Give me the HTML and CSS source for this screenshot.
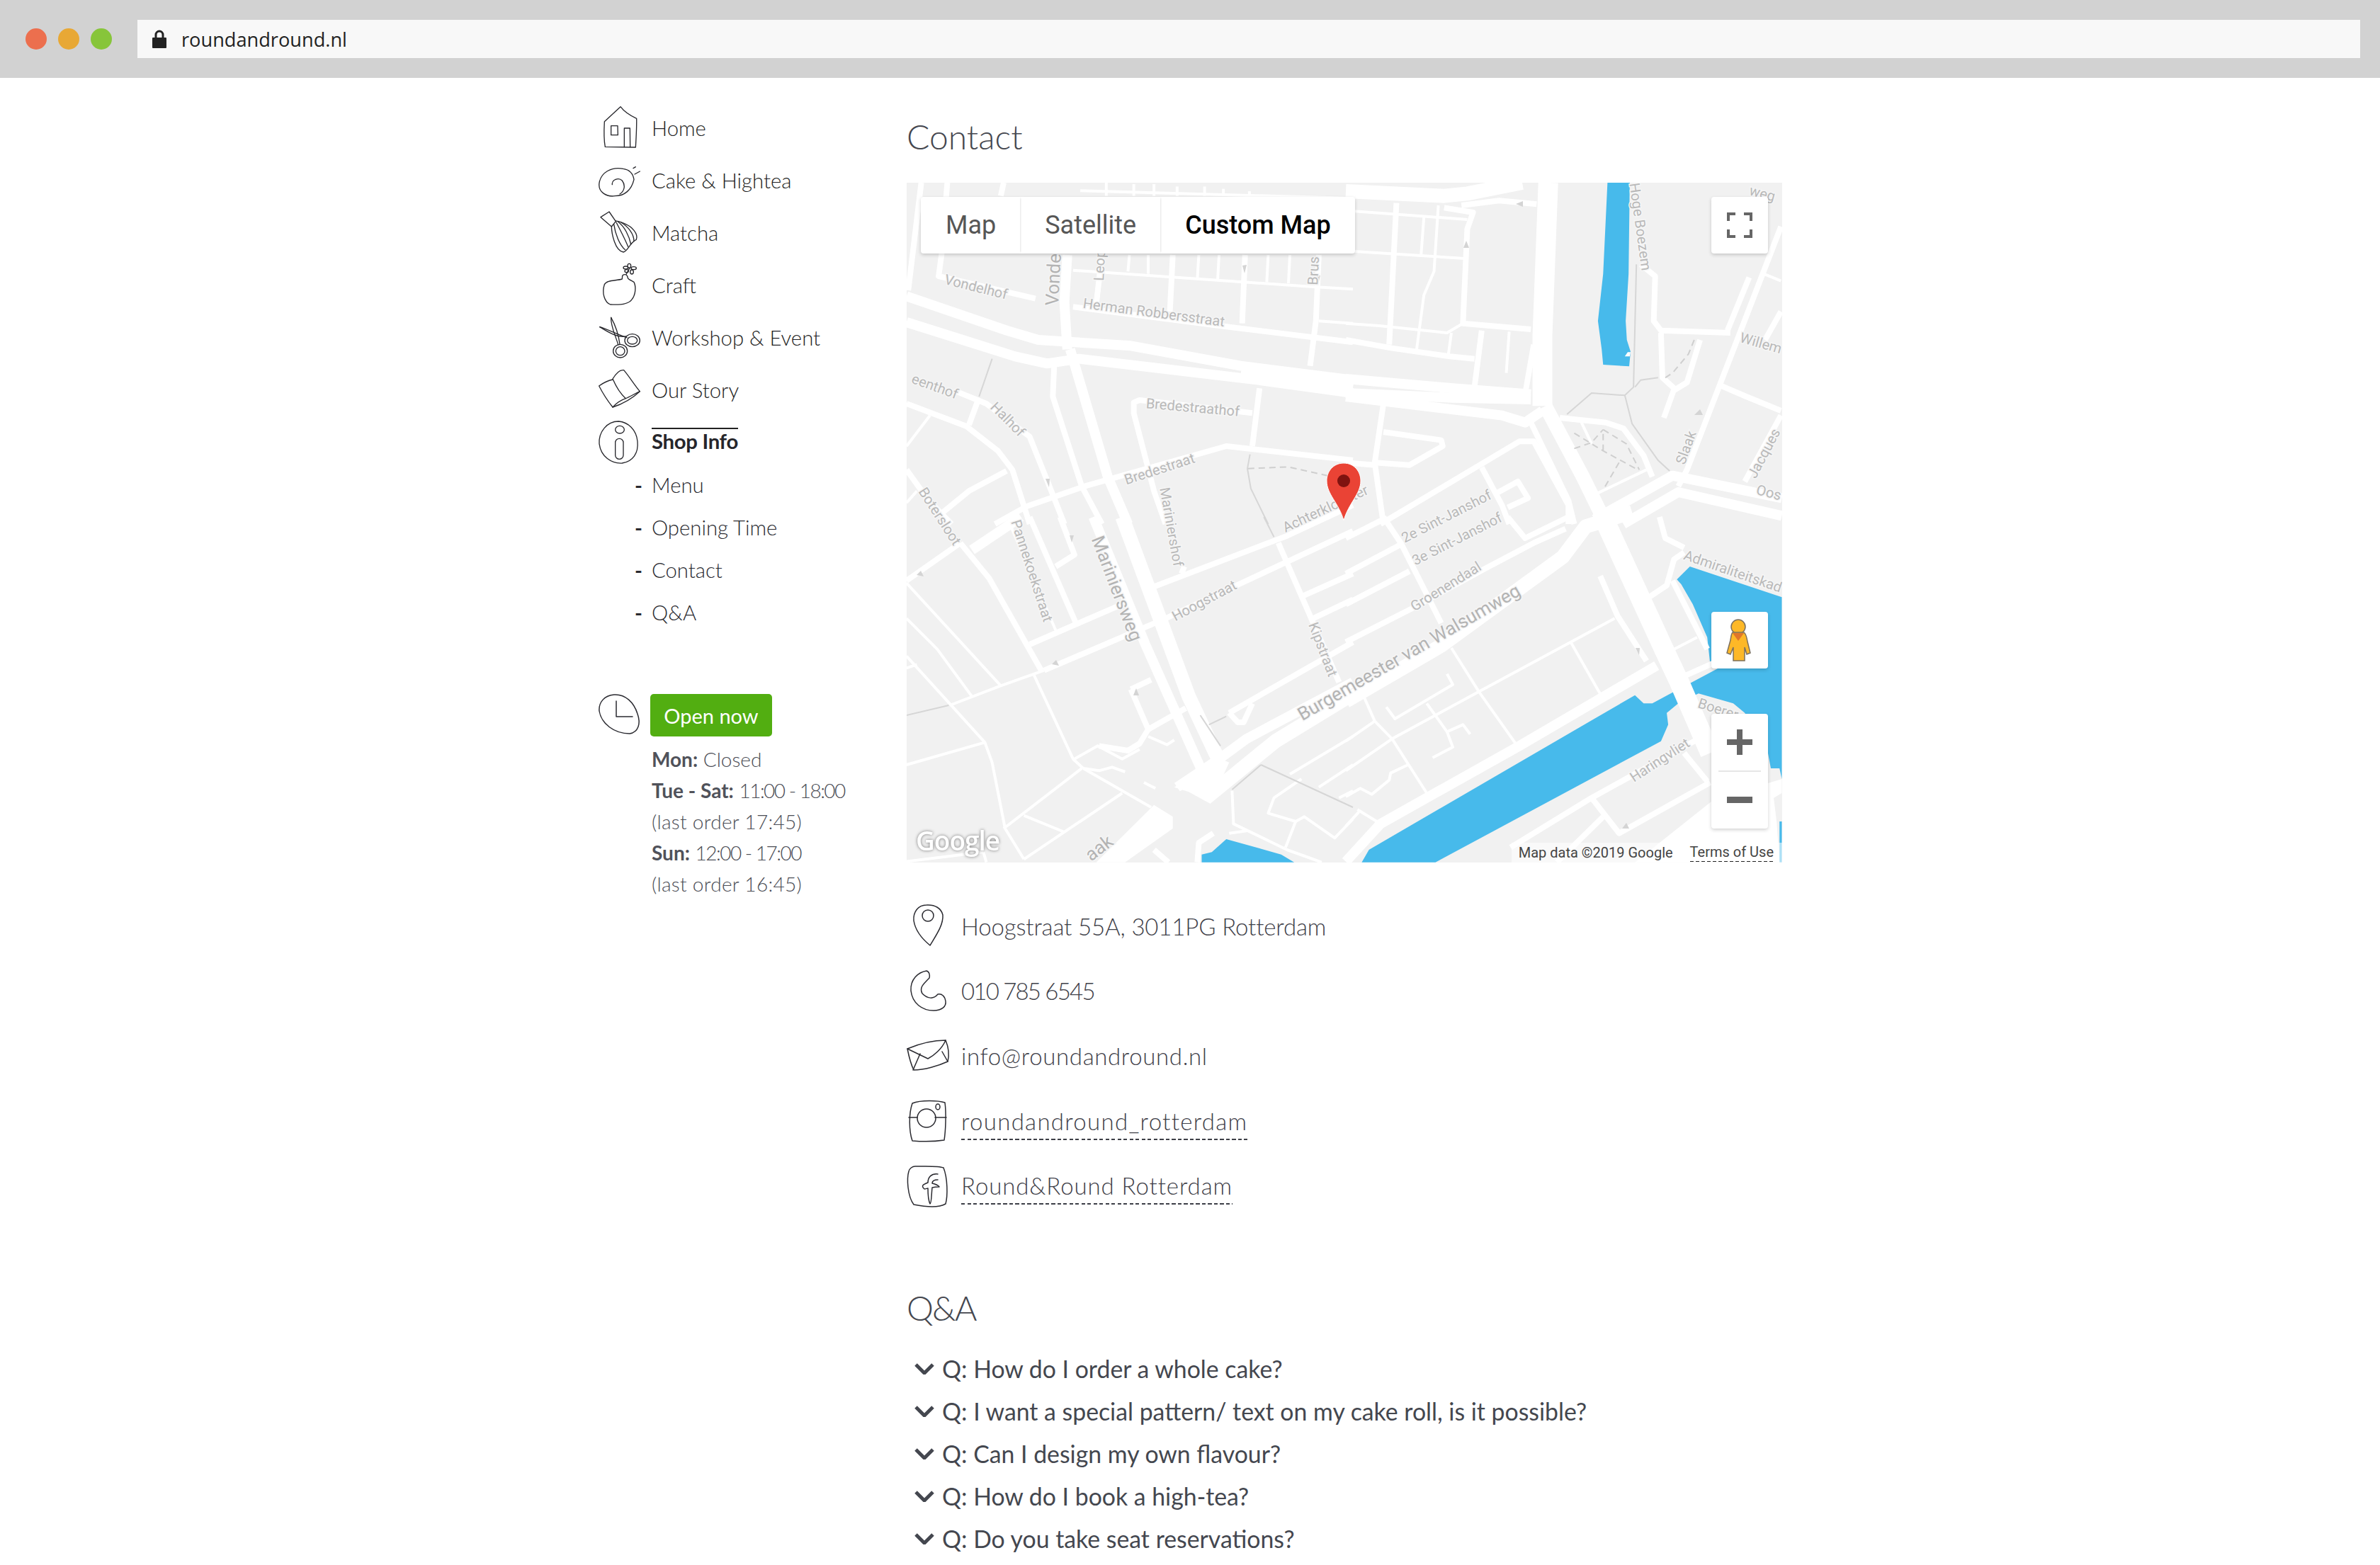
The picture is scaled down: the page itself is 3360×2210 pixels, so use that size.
FILE: index.html
```html
<!DOCTYPE html>
<html lang="en">
<head>
<meta charset="utf-8">
<title>Round&amp;Round - Contact</title>
<link rel="stylesheet" href="styles.css">
</head>
<body>
<header class="browser">
  <div class="dots"><span class="dot red"></span><span class="dot amber"></span><span class="dot green"></span></div>
  <div class="address">
    <svg class="lock" viewBox="0 0 20 26"><path class="lock-body" d="M1 11h18a1 1 0 0 1 1 1v13a1 1 0 0 1-1 1H1a1 1 0 0 1-1-1V12a1 1 0 0 1 1-1z"/><path class="lock-bow" d="M5 12V7a5 5 0 0 1 10 0v5"/></svg>
    <span>roundandround.nl</span>
  </div>
</header>
<div class="page">
  <aside class="sidebar">
    <ul class="nav">
      <li class="nav-item"><svg class="sk nav-icon" viewBox="75 60 180 180"><path d="M168 62 L100 125 C98 160 97 200 103 232 L232 234 C234 200 237 150 236 112 C210 100 185 85 168 62Z"/><path d="M128 143 L156 143 L157 182 L128 182Z"/><path d="M184 233 L184 153 L208 153 L209 233"/></svg><a>Home</a></li>
      <li class="nav-item"><svg class="sk nav-icon" viewBox="75 282 180 180"><path d="M180 325 C130 315 85 340 78 385 C72 425 110 445 145 440 C185 440 215 415 225 370 C220 340 200 328 180 325Z"/><path d="M133 392 C130 372 160 360 175 375 C190 395 185 420 165 432"/><path d="M222 323 L232 317"/><path d="M228 348 L250 336"/></svg><a>Cake &amp; Hightea</a></li>
      <li class="nav-item"><svg class="sk nav-icon" viewBox="75 504 180 180"><path d="M84 530 L120 507 L148 548 L130 570 Z"/><path d="M130 568 C130 600 145 672 180 678 C200 675 205 640 235 625 C245 600 215 570 190 560 C175 550 160 548 148 546"/><path d="M140 560 C145 600 165 650 188 668"/><path d="M150 552 C170 590 190 630 200 655"/><path d="M158 550 C185 570 205 610 212 645"/><path d="M170 552 C200 570 225 600 225 632"/></svg><a>Matcha</a></li>
      <li class="nav-item"><svg class="sk nav-icon" viewBox="75 726 180 180"><path d="M175 792 C150 800 110 795 100 815 C88 850 100 890 125 900 C160 902 200 900 215 880 C232 860 235 825 225 805 C215 800 205 795 200 790 L196 778 C190 770 180 772 176 778Z"/><path d="M192 772 L207 745"/><ellipse cx="205" cy="736" rx="7" ry="9"/><ellipse cx="224" cy="746" rx="11" ry="6"/><ellipse cx="216" cy="762" rx="7" ry="9"/><ellipse cx="190" cy="744" rx="10" ry="6"/><ellipse cx="194" cy="758" rx="8" ry="6"/></svg><a>Craft</a></li>
      <li class="nav-item"><svg class="sk nav-icon" viewBox="75 948 180 180"><path d="M128 955 C125 990 150 1040 158 1070"/><path d="M128 955 C145 985 160 1030 165 1068"/><path d="M80 995 C115 1005 160 1030 195 1040"/><path d="M80 995 C120 1020 155 1040 190 1035"/><ellipse cx="218" cy="1052" rx="32" ry="27"/><ellipse cx="218" cy="1052" rx="21" ry="16"/><ellipse cx="167" cy="1097" rx="30" ry="28"/><ellipse cx="167" cy="1097" rx="19" ry="18"/></svg><a>Workshop &amp; Event</a></li>
      <li class="nav-item"><svg class="sk nav-icon" viewBox="75 1170 180 180"><path d="M135 1215 C150 1190 165 1175 182 1178 C205 1205 230 1245 250 1268 C225 1280 205 1292 190 1298 C170 1280 150 1250 135 1215Z"/><path d="M135 1218 C115 1222 95 1232 77 1245 C95 1280 115 1310 135 1335 C150 1318 170 1305 190 1298"/><path d="M135 1335 C165 1325 205 1310 250 1268"/></svg><a>Our Story</a></li>
      <li class="nav-item active"><svg class="sk nav-icon" viewBox="75 1392 180 180"><path d="M160 1395 C110 1395 75 1440 78 1490 C85 1545 130 1575 175 1572 C220 1565 245 1530 240 1480 C235 1430 200 1398 160 1395Z"/><ellipse cx="165" cy="1430" rx="19" ry="16"/><rect x="146" y="1468" width="34" height="87" rx="17"/></svg><a>Shop Info</a></li>
    </ul>
    <ul class="subnav">
      <li>Menu</li>
      <li>Opening Time</li>
      <li>Contact</li>
      <li>Q&amp;A</li>
    </ul>
    <div class="status">
      <svg class="sk-px clock" viewBox="0 0 60 60"><path d="M22 1 C8 2 0 12 1 24 C4 42 22 56 44 56 C56 54 60 42 55 28 C50 12 38 0 22 1Z"/><path d="M25 10 L25 32 L48 32"/></svg>
      <span class="open-badge">Open now</span>
    </div>
    <div class="hours">
      <p><b>Mon:</b> Closed</p>
      <p><b>Tue - Sat:</b> <span class="time">11:00 - 18:00</span></p>
      <p class="last">(last order 17:45)</p>
      <p><b>Sun:</b> <span class="time">12:00 - 17:00</span></p>
      <p class="last">(last order 16:45)</p>
    </div>
  </aside>
  <main class="content">
    <h1 class="title">Contact</h1>
    <section class="map">
      <svg class="map-canvas" viewBox="0 0 1236 960">
        <!-- top left quadrant -->
        <g transform="translate(-10,-18) scale(.40816,.33333)">
          <g class="rd xl">
            <path d="M1180 865 L1568 925"/>
          </g>
          <g class="rd l">
            <path d="M24 535 L370 680 L480 720 L800 745 L1180 830 L1568 890"/>
            <path d="M24 645 L400 790 L510 820 L620 800 L1240 890 L1568 945"/>
            <path d="M590 760 L720 1300 L790 1500"/>
            <path d="M580 360 L570 560 L580 760"/>
          </g>
          <g class="rd m">
            <path d="M535 820 L530 960 L630 1340 L700 1500"/>
            <path d="M700 360 L680 570"/>
            <path d="M945 360 L935 600"/>
            <path d="M1195 360 L1185 650"/>
            <path d="M1450 360 L1440 640 L1420 830"/>
            <path d="M600 580 L1140 665 L1568 730"/>
            <path d="M165 54 L145 360 L135 450 L470 545"/>
            <path d="M75 54 L30 510"/>
            <path d="M360 54 L350 110"/>
            <path d="M200 940 L300 990 L450 1130 L515 1330 L570 1500"/>
            <path d="M270 980 L240 1080"/>
            <path d="M24 990 L230 1085 L340 1190 L390 1270 L450 1500"/>
            <path d="M150 1450 L240 1360 L370 1275"/>
            <path d="M330 1500 L440 1425 L640 1340 L1130 1170 L1568 1230"/>
            <path d="M1220 1030 L830 975 L810 985 L810 1030 L880 1360 L920 1500"/>
            <path d="M1245 925 L1220 1170"/>
            <path d="M24 1270 L100 1400 L180 1500"/>
          </g>
          <g class="rd s">
            <path d="M600 425 L1430 495 L1568 505"/>
            <path d="M795 360 L790 430"/><path d="M860 360 L860 440"/><path d="M1035 360 L1030 460"/><path d="M1105 360 L1100 470"/><path d="M1275 360 L1270 475"/><path d="M1350 360 L1345 480"/>
            <path d="M1450 640 L1568 650"/>
            <path d="M24 1170 L105 1040"/>
            <path d="M24 1410 L60 1360"/>
            <path d="M625 88 L1568 120"/>
            <path d="M715 54 L715 110"/><path d="M810 60 L810 110"/><path d="M880 60 L880 110"/><path d="M960 70 L960 110"/><path d="M1055 70 L1055 110"/><path d="M1120 80 L1120 110"/><path d="M1210 90 L1210 110"/>
          </g>
          <path class="pth" d="M320 800 L275 960"/>
          <path class="pth" d="M1212 1205 L1203 1265 L1215 1350 L1275 1500"/>
          <path class="pth dash" d="M1205 1265 L1345 1258 L1480 1295"/>
        </g>
        <!-- top right quadrant -->
        <g transform="translate(620,-18) scale(.40816,.33333)">
          <polygon class="water" points="905,54 982,54 978,440 968,640 972,720 985,770 980,832 890,825 885,760 872,640 890,440"/>
          <polygon class="paper" points="965,790 975,772 985,772 982,790"/>
          <g class="rd xxl">
            <path d="M700 54 L680 700 L680 1000"/>
          </g>
          <g class="rd xl">
            <path d="M690 1000 L820 1300 L900 1500"/>
            <path d="M0 90 L340 110 L420 100 L610 54"/>
          </g>
          <g class="rd l">
            <path d="M0 885 L370 925 L640 950"/>
            <path d="M0 945 L370 965 L640 972"/>
            <path d="M0 960 L540 1040 L620 1070 L680 1020"/>
            <path d="M860 1480 L1130 1295 L1508 1390"/>
            <path d="M960 1500 L1150 1365 L1508 1465"/>
          </g>
          <g class="rd m">
            <path d="M400 150 L530 130 L660 145"/>
            <path d="M340 160 L440 180 L420 250 L405 650 L640 675"/>
            <path d="M175 140 L150 740"/>
            <path d="M0 720 L160 755 L360 790 L445 800"/>
            <path d="M470 680 L445 920"/>
            <path d="M650 740 L620 950"/>
            <path d="M640 1070 L770 1400 L790 1500"/>
            <path d="M740 1050 L900 1070 L960 1095 L1030 1210 L1060 1300"/>
            <path d="M130 990 L100 1240 L130 1500"/>
            <path d="M130 1110 L330 1145 L335 1170 L220 1250 L100 1240"/>
            <path d="M0 1240 L100 1250"/>
            <path d="M120 1500 L600 1150 L650 1150 L770 1420 L770 1500"/>
            <path d="M470 1260 L540 1420 L565 1500"/>
            <path d="M520 1370 L595 1320 L630 1390 L560 1430"/>
            <path d="M1020 400 L1070 450 L1065 640 L1090 680 L1330 690"/>
            <path d="M1090 690 L1095 880 L1140 930 L1180 900 L1225 720"/>
            <path d="M1135 930 L1100 1050"/>
            <path d="M1505 240 L1180 1270 L1150 1340"/>
            <path d="M1395 455 L1320 680"/>
            <path d="M1290 910 L1385 960 L1505 1020"/>
            <path d="M1505 600 L1450 720"/>
            <path d="M1505 1040 L1380 1320"/>
          </g>
          <g class="rd s">
            <path d="M30 175 L420 210"/>
            <path d="M30 345 L410 375"/>
            <path d="M270 200 L260 365"/>
            <path d="M320 150 L305 430 L270 530 L245 760"/>
            <path d="M0 650 L115 660 L350 690 L405 650"/>
            <path d="M565 685 L555 860"/>
            <path d="M365 690 L355 780"/>
            <path d="M1445 440 L1505 470"/>
            <path d="M870 1370 L1040 1270"/>
            <path d="M815 1070 L850 1160"/>
          </g>
          <path class="pth" d="M1005 400 L995 920 L965 955 L850 945 L765 1035"/>
          <path class="pth" d="M965 955 L990 1075 L1080 1230 L1120 1275"/>
          <path class="pth" d="M1000 920 L1020 890 L1080 880"/>
          <path class="pth dash" d="M1205 720 L1185 780 L1130 860 L1105 880"/>
          <path class="pth dash" d="M790 1115 L890 1190 L1010 1270 M890 1190 L890 1100 L970 1160 L1015 1270 M790 1180 L850 1155 L890 1100 M945 1240 L890 1355"/>
        </g>
        <!-- bottom left quadrant -->
        <g transform="translate(-10,472) scale(.40816,.33333)">
          <polygon class="water" points="1045,1430 1080,1420 1130,1365 1320,1430 1365,1463 1045,1463"/>
          <polygon class="paper" points="680,1463 880,1220 945,1270 945,1320 780,1463"/>
          <polygon class="paper" points="950,1145 1100,1020 1140,1040 1075,1215 1000,1165"/>
          <g class="rd xl">
            <path d="M770 0 L1000 760 L1100 1020"/>
            <path d="M1060 1190 L1300 950 L1568 750"/>
          </g>
          <g class="rd l">
            <path d="M670 0 L850 540 L1040 1060"/>
            <path d="M250 140 L420 0"/>
            <path d="M960 1145 L1100 1030 L1200 940 L1568 700"/>
          </g>
          <g class="rd m">
            <path d="M24 270 L210 110"/>
            <path d="M210 110 L310 260 L490 650"/>
            <path d="M450 0 L610 450"/>
            <path d="M450 540 L600 460 L770 370"/>
            <path d="M555 0 L605 160 L540 210"/>
            <path d="M870 300 L1340 80 L1568 -50"/>
            <path d="M500 650 L920 430 L1340 190 L1568 60"/>
            <path d="M1310 110 L1520 700"/>
            <path d="M800 730 L870 690"/>
            <path d="M800 730 L860 900 L830 960 L790 990 L690 970"/>
            <path d="M860 900 L990 810"/>
            <path d="M1385 340 L1568 240"/>
            <path d="M1430 430 L1568 350"/>
            <path d="M1140 830 L1568 530"/>
            <path d="M1140 830 L1170 870 L1190 870 L1220 790"/>
            <path d="M985 210 L975 240"/>
            <path d="M880 1410 L930 1463"/>
            <path d="M1030 1463 L1035 1380 L1085 1340"/>
          </g>
          <g class="rd s">
            <path d="M385 40 L540 480"/>
            <path d="M24 280 L350 715"/>
            <path d="M24 430 L130 560 L250 760"/>
            <path d="M24 590 L180 800 L295 955 L320 1040 L365 1320 L430 1450"/>
            <path d="M24 1050 L295 955"/>
            <path d="M180 795 L350 715 L500 650"/>
            <path d="M465 670 L600 1025 L635 1065"/>
            <path d="M605 1025 L685 970 L770 1025 L830 985"/>
            <path d="M635 1065 L690 1075 L735 1060 L780 1080"/>
            <path d="M635 1065 L870 1230"/>
            <path d="M630 1065 L360 1320"/>
            <path d="M430 1265 L570 1335"/>
            <path d="M430 1450 L770 1170"/>
            <path d="M24 640 L60 625"/>
            <path d="M860 930 L925 965 L950 945"/>
            <path d="M1350 1090 L1568 930"/>
            <path d="M1450 1145 L1568 1050"/>
            <path d="M1520 1190 L1568 1160"/>
            <path d="M1390 1110 L1295 1190 L1275 1255 L1370 1290 L1400 1270 L1505 1360 L1568 1280"/>
            <path d="M1370 1290 L1335 1400"/>
            <path d="M1150 1160 L1155 1300 L1340 1410 L1460 1463"/>
            <path d="M1140 1340 L1200 1330"/>
            <path d="M0 1463 L290 1420"/>
            <path d="M290 1420 L300 1463"/>
            <path d="M845 1125 L885 1150"/>
          </g>
          <path class="pth" d="M24 840 L170 798"/>
          <path class="pth" d="M1250 1050 L1568 1230"/>
          <path class="pth" d="M1150 1155 L1250 1050"/>
          <path class="pth" d="M1070 880 L1130 845"/>
          <path class="pth" d="M1260 0 L1295 85"/>
          <path class="pth" d="M1110 970 L1040 840"/>
        </g>
        <!-- bottom right quadrant -->
        <g transform="translate(620,472) scale(.40816,.33333)">
          <polygon class="water" points="80,1410 1000,755 1030,790 1060,790 1135,740 1150,790 1110,830 1115,880 1090,950 310,1463 55,1463"/>
          <polygon class="water" points="1145,265 1190,210 1508,340 1508,1110 1500,1065 1470,1065 1460,1000 1380,830 1340,790 1220,748 1190,765 1175,715 1290,640 1260,620 1250,510 1200,370 1160,285"/>
          <polygon class="water" points="1500,1290 1508,1290 1508,1463 1500,1463"/>
          <polygon class="paper" points="1000,1463 1270,1200 1508,1110 1508,1170 1480,1190 1490,1290 1500,1463"/>
          <g class="rd xxl">
            <path d="M890 0 L1100 560 L1150 690 L1260 1000"/>
          </g>
          <g class="rd xl">
            <path d="M0 780 L330 545 L750 170 L830 40 L990 -20"/>
          </g>
          <g class="rd l">
            <path d="M0 1460 L120 1300 L600 970 L1075 630"/>
          </g>
          <g class="rd m">
            <path d="M130 0 L190 110 L330 450"/>
            <path d="M0 90 L130 10"/>
            <path d="M0 240 L185 120"/>
            <path d="M0 370 L220 230"/>
            <path d="M0 530 L225 390 L480 220 L650 110 L760 50"/>
            <path d="M560 0 L620 90 L770 0"/>
            <path d="M880 250 L940 420 L1040 610"/>
            <path d="M1000 380 L1110 290 L1135 180 L1170 150"/>
            <path d="M1130 270 L1250 560"/>
            <path d="M1085 0 L1105 90 L1170 130"/>
            <path d="M570 1400 L850 1190 L1220 940"/>
            <path d="M850 1190 L945 1340 L1260 1125"/>
            <path d="M1170 1000 L1250 1120"/>
            <path d="M730 1463 L890 1270"/>
            <path d="M1160 680 L1270 620"/>
          </g>
          <g class="rd s">
            <path d="M365 555 L460 740 L590 965"/>
            <path d="M780 535 L880 750"/>
            <path d="M930 430 L460 740 L160 940 L0 1075"/>
            <path d="M60 755 L100 865 L160 940 L280 1170"/>
            <path d="M100 865 L0 950"/>
            <path d="M215 1050 L155 1085 L150 1115 L90 1175 L50 1150 L0 1185"/>
            <path d="M350 665 L370 710 L170 855 L140 805"/>
            <path d="M280 790 L350 910 L370 975 L300 1020"/>
            <path d="M350 910 L405 880 L430 920"/>
            <path d="M40 1240 L120 1300"/>
            <path d="M45 1250 L0 1310"/>
            <path d="M1120 570 L1215 510"/>
          </g>
        </g>
        <g class="ar">
          <path d="M474 117 l6 -1 l-3 12 z"/><path d="M578 131 l6 0 l-3 12 z"/><path d="M196 418 l6 0 l-1 12 z"/>
          <path d="M860 30 l10 -4 l0 8 z"/>
          <path d="M786 92 l4 -10 l4 10 z"/>
          <path d="M1112 328 l8 -8 l4 8 z"/>
          <path d="M230 498 l6 0 l-3 10 z"/>
          <path d="M14 554 l6 -6 l4 8 z"/>
          <path d="M205 680 l6 -6 l4 8 z"/>
          <path d="M320 724 l4 -10 l4 10 z"/>
          <path d="M1029 657 l6 0 l-1 10 z"/>
          <path d="M1010 912 l6 -8 l4 8 z"/>
        </g>
        <g class="lb">
          <text x="98" y="154" transform="rotate(14 98 147)">Vondelhof</text>
          <text class="lg" x="214" y="174" text-anchor="start" transform="rotate(-87 214 174)">Vonde</text>
          <text x="278" y="139" text-anchor="start" transform="rotate(-87 278 139)">Leop</text>
          <text x="580" y="145" text-anchor="start" transform="rotate(-87 580 145)">Brus</text>
          <text x="349" y="190" transform="rotate(7.5 349 183)">Herman Robbersstraat</text>
          <text x="72" y="306" text-anchor="end" transform="rotate(20 72 299)">eenthof</text>
          <text x="143" y="341" transform="rotate(45 143 334)">Halhof</text>
          <text x="404" y="324" transform="rotate(5 404 317)">Bredestraathof</text>
          <text x="357" y="411" transform="rotate(-18 357 404)">Bredestraat</text>
          <text x="374" y="493" transform="rotate(80 374 486)">Mariniershof</text>
          <text x="47" y="478" transform="rotate(57 47 471)">Botersloot</text>
          <text x="177" y="555" transform="rotate(72 177 548)">Pannekoekstraat</text>
          <text class="lg" x="297" y="582" transform="rotate(69 297 573)">Mariniersweg</text>
          <text x="420" y="597" transform="rotate(-28 420 590)">Hoogstraat</text>
          <text x="591" y="467" transform="rotate(-25 591 460)">Achterklooster</text>
          <text x="588" y="666" transform="rotate(69 588 659)">Kipstraat</text>
          <text class="lg" x="709" y="672" transform="rotate(-30 709 663)">Burgemeester van Walsumweg</text>
          <text x="762" y="478" transform="rotate(-27 762 471)">2e Sint-Janshof</text>
          <text x="777" y="510" transform="rotate(-27 777 503)">3e Sint-Janshof</text>
          <text x="761" y="577" transform="rotate(-32 761 570)">Groenendaal</text>
          <text x="1036" y="69" transform="rotate(82 1036 62)">Hoge Boezem</text>
          <text x="1100" y="381" transform="rotate(-70 1100 374)">Slaak</text>
          <text x="1177" y="225" text-anchor="start" transform="rotate(16 1177 218)">Willem</text>
          <text x="1210" y="389" transform="rotate(-62 1210 382)">Jacques</text>
          <text x="1200" y="440" text-anchor="start" transform="rotate(14 1200 433)">Oos</text>
          <text x="1208" y="22" transform="rotate(15 1208 15)">weg</text>
          <text x="1098" y="532" text-anchor="start" transform="rotate(19 1098 525)">Admiraliteitskad</text>
          <text x="1118" y="741" text-anchor="start" transform="rotate(18 1118 734)">Boerer</text>
          <text x="1063" y="822" transform="rotate(-33 1063 815)">Haringvliet</text>
          <text class="lg" x="272" y="948" transform="rotate(-38 272 940)">aak</text>
        </g>
        <text class="goog" x="13" y="943">Google</text>
        <g class="pin">
          <path class="pin-body" d="M617 396 C602 396 593 408 593 421 C593 440 610 452 617 477 C624 452 641 440 641 421 C641 408 632 396 617 396Z"/>
          <ellipse class="pin-dot" cx="617" cy="421" rx="9" ry="9"/>
        </g>
      </svg>
      <div class="map-types ctl">
        <span class="mt">Map</span>
        <span class="mt">Satellite</span>
        <span class="mt on">Custom Map</span>
      </div>
      <div class="ctl fs"><svg class="cicon" viewBox="0 0 36 36"><path d="M2 12V2h10M24 2h10v10M2 24v10h10M24 34h10V24"/></svg></div>
      <div class="ctl peg"><svg class="peg-svg" viewBox="0 0 80 80"><circle class="peg-y" cx="38" cy="21" r="10"/><path class="peg-y" d="M30 29 L46 29 C50 32 50 38 51 42 L55 58 L50 60 L47 50 L47 69 L31 69 L31 50 L27 60 L22 58 L27 40 C28 34 28 31 30 29Z"/><path class="peg-o" d="M30 30 L46 30 L38 41Z"/></svg></div>
      <div class="ctl zoom">
        <div class="zb"><svg class="zi" viewBox="0 0 36 36"><path d="M14 0h8v14h14v8H22v14h-8V22H0v-8h14z"/></svg></div>
        <div class="zdiv"></div>
        <div class="zb"><svg class="zi" viewBox="0 0 36 36"><path d="M0 13h36v9H0z"/></svg></div>
      </div>
      <div class="attrib"><span>Map data ©2019 Google</span><a class="terms">Terms of Use</a></div>
    </section>
    <ul class="details">
      <li class="detail"><svg class="sk-px d-icon" viewBox="0 0 60 60"><path d="M28 0 C16 0 9 10 10 22 C12 35 22 48 33 57 C42 42 52 28 51 14 C49 5 40 -1 28 0Z"/><circle cx="30" cy="15" r="8"/></svg><span class="t-addr">Hoogstraat 55A, 3011PG Rotterdam</span></li>
      <li class="detail"><svg class="sk-px d-icon" viewBox="0 0 60 60"><path d="M28 2 C16 4 5 14 6 30 C8 48 22 58 38 58 C50 58 56 52 55 45 C54 38 50 34 44 35 C38 42 30 42 22 34 C18 26 22 22 32 12 C33 8 32 3 28 2Z"/></svg><span class="t-tel">010 785 6545</span></li>
      <li class="detail"><svg class="sk-px d-icon" viewBox="0 0 60 60"><path d="M1 20 C20 12 40 8 55 8 C60 20 60 30 58 38 C45 44 25 50 10 50 C5 40 3 30 1 20Z"/><path d="M1 20 L30 34 C38 30 50 20 55 8"/><path d="M19 27 L9 50"/><path d="M50 24 L58 38"/></svg><span class="t-mail">info@roundandround.nl</span></li>
      <li class="detail"><svg class="sk-px d-icon" viewBox="0 0 60 60"><path d="M8 6 C20 1 45 2 54 5 C56 20 55 45 53 58 C40 60 20 60 8 59 C3 45 3 20 8 6Z"/><path d="M3 26 L15 26"/><path d="M40 26 L56 26"/><circle cx="28" cy="27" r="13"/><ellipse cx="44" cy="11" rx="3" ry="4"/></svg><a class="dashed t-ig">roundandround_rotterdam</a></li>
      <li class="detail"><svg class="sk-px d-icon" viewBox="0 0 60 60"><path d="M12 3 C25 3 45 2 52 5 C58 20 58 45 55 56 C45 62 25 60 10 57 C1 45 0 20 3 10 C4 6 8 3 12 3Z"/><path d="M44 14 C35 13 30 18 30 26 C25 28 19 30 25 35 C27 35 29 34 30 34 C30 42 31 52 33 56 C35 56 35 42 36 33 C40 32 44 32 46 32 C44 29 40 28 36 27 C36 23 40 22 44 22"/></svg><a class="dashed t-fb">Round&amp;Round Rotterdam</a></li>
    </ul>
    <h2 class="title qa-title">Q&amp;A</h2>
    <ul class="faq">
      <li class="faq-item"><svg class="chev" viewBox="0 0 28 16"><path d="M2 2 L14 14 L26 2"/></svg>Q: How do I order a whole cake?</li>
      <li class="faq-item"><svg class="chev" viewBox="0 0 28 16"><path d="M2 2 L14 14 L26 2"/></svg>Q: I want a special pattern/ text on my cake roll, is it possible?</li>
      <li class="faq-item"><svg class="chev" viewBox="0 0 28 16"><path d="M2 2 L14 14 L26 2"/></svg>Q: Can I design my own flavour?</li>
      <li class="faq-item"><svg class="chev" viewBox="0 0 28 16"><path d="M2 2 L14 14 L26 2"/></svg>Q: How do I book a high-tea?</li>
      <li class="faq-item"><svg class="chev" viewBox="0 0 28 16"><path d="M2 2 L14 14 L26 2"/></svg>Q: Do you take seat reservations?</li>
    </ul>
  </main>
</div>
</body>
</html>
```
FILE: styles.css
```css
* { box-sizing: border-box; }
html, body { margin: 0; padding: 0; background: #fff; }
body { font-family: "Lato", "Noto Sans", sans-serif; color: #3d3f47; overflow: hidden; height: 2210px; }
ul { list-style: none; margin: 0; padding: 0; }
p { margin: 0; }

/* browser chrome */
.browser { height: 110px; background: #d2d2d2; display: flex; align-items: flex-start; padding: 28px 28px 0 36px; }
.dots { display: flex; gap: 16px; width: 158px; padding-top: 12px; }
.dot { width: 30px; height: 30px; border-radius: 50%; }
.red { background: #ec6f4e; }
.amber { background: #e8a835; }
.green { background: #87c53a; }
.address { flex: 1; height: 54px; background: #f8f8f8; display: flex; align-items: center; padding-left: 21px; gap: 21px; font: 400 27.2px "Open Sans", sans-serif; color: #222; }
.lock { width: 20px; height: 26px; }
.lock-body { fill: #222; }
.lock-bow { fill: none; stroke: #222; stroke-width: 3; }

.page { display: flex; padding-left: 845px; }

/* sidebar */
.sidebar { width: 435px; padding-top: 33px; flex: none; font-size: 29.3px; font-weight: 300; }
.nav-item { height: 74px; display: flex; align-items: center; gap: 15px; color: #1f1f24; }
.nav-icon { width: 60px; height: 60px; flex: none; overflow: visible; }
.sk path, .sk ellipse, .sk rect { fill: none; stroke: #26262b; stroke-width: 4; stroke-linejoin: round; stroke-linecap: round; }
.sk-px path, .sk-px ellipse, .sk-px circle { fill: none; stroke: #2a2a30; stroke-width: 1.5; stroke-linejoin: round; stroke-linecap: round; }
.active a { font-weight: 700; letter-spacing: -.3px; border-top: 2px solid #222; line-height: 34px; margin-top: -4px; color: #26262b; }
.subnav { height: 240px; margin: -6px 0 85px; color: #2a2a30; }
.subnav li { height: 60px; line-height: 60px; padding-left: 51px; }
.subnav li::before { content: "-"; display: inline-block; width: 24px; font-weight: 700; }
.status { display: flex; gap: 13px; height: 60px; }
.clock { width: 60px; height: 60px; flex: none; overflow: visible; }
.open-badge { width: 172px; height: 60px; background: #52ae11; color: #fff; border-radius: 5px; display: flex; align-items: center; justify-content: center; font-weight: 400; font-size: 29px; }
.hours { margin: 10px 0 0 75px; font-size: 28px; line-height: 44px; color: #4a4c54; white-space: nowrap; }
.hours b { font-weight: 700; color: #50525a; }
.time { letter-spacing: -1.5px; }
.last { letter-spacing: .3px; }

/* main column */
.content { width: 1236px; padding-top: 53px; flex: none; }
.title { margin: 0; font-size: 48px; line-height: 60px; font-weight: 300; color: #45474f; }
.map { position: relative; width: 1236px; height: 960px; margin-top: 35px; overflow: hidden; background: #f1f1f1; }
.map-canvas { display: block; width: 1236px; height: 960px; }
.water { fill: #47baeb; }
.paper { fill: #fff; }
.rd path { fill: none; stroke: #fff; vector-effect: non-scaling-stroke; stroke-linejoin: round; stroke-linecap: butt; }
.rd.s path { stroke-width: 4px; }
.rd.m path { stroke-width: 8px; }
.rd.l path { stroke-width: 14px; }
.rd.xl path { stroke-width: 20px; }
.rd.xxl path { stroke-width: 28px; }
.pth { fill: none; stroke: #d6d6d6; stroke-width: 2px; vector-effect: non-scaling-stroke; }
.pth.dash { stroke: #cfcfcf; stroke-dasharray: 9 6; }
.ar path { fill: #d4d4d4; }
.lb text { font: 400 20px "Roboto", sans-serif; fill: #b9b9b9; text-anchor: middle; stroke: #f6f6f6; stroke-width: 3px; paint-order: stroke; }
.lb text[text-anchor="start"] { text-anchor: start; }
.lb text[text-anchor="end"] { text-anchor: end; }
.lb text.lg { font-size: 26px; fill: #b3b3b3; }
.goog { font: 600 37px "Open Sans", sans-serif; fill: #fff; letter-spacing: -1px; filter: drop-shadow(0 0 2px rgba(0,0,0,.5)); }
.pin-body { fill: #ea4335; stroke: #fff; stroke-width: 1px; }
.pin-dot { fill: #7f1310; }

/* map controls */
.ctl { position: absolute; background: #fff; border-radius: 4px; box-shadow: 0 2px 5px rgba(0,0,0,.18); }
.map-types { left: 20px; top: 20px; height: 80px; display: flex; font: 400 36px "Roboto", sans-serif; color: #565656; }
.mt { display: flex; align-items: center; justify-content: center; height: 80px; padding: 0 34px 0 35px; box-shadow: 2px 0 3px -2px rgba(0,0,0,.2); }
.mt.on { color: #000; font-weight: 500; box-shadow: none; }
.fs { left: 1136px; top: 20px; width: 80px; height: 80px; display: flex; align-items: center; justify-content: center; }
.cicon { width: 36px; height: 36px; }
.cicon path { fill: none; stroke: #666; stroke-width: 4; }
.peg { left: 1136px; top: 606px; width: 80px; height: 80px; }
.peg-svg { display: block; width: 80px; height: 80px; }
.peg-y { fill: #fdb827; stroke: #7c705e; stroke-width: 1.5; }
.peg-o { fill: #e0762a; }
.zoom { left: 1136px; top: 750px; width: 80px; height: 162px; display: flex; flex-direction: column; align-items: center; }
.zb { flex: 1; display: flex; align-items: center; justify-content: center; }
.zi { width: 36px; height: 36px; }
.zi path { fill: #666; }
.zdiv { width: 60px; height: 2px; background: #e6e6e6; }
.attrib { position: absolute; right: 0; bottom: 0; height: 28px; padding: 0 12px 0 10px; background: rgba(255,255,255,.55); display: flex; align-items: center; gap: 24px; font: 400 20px "Roboto", sans-serif; color: #444; }
.terms { line-height: 23px; padding-bottom: 2px; background: repeating-linear-gradient(90deg, #222 0 5px, transparent 5px 8px) left bottom / 100% 1px no-repeat; }

/* details */
.details { margin-top: 44px; }
.detail { height: 91.5px; display: flex; align-items: center; gap: 17px; font-size: 33px; font-weight: 300; color: #3f4149; }
.d-icon { width: 60px; height: 60px; flex: none; overflow: visible; }
.dashed { display: inline-block; line-height: 40px; padding-bottom: 7px; margin-top: 8px; background: repeating-linear-gradient(90deg, #3d3f47 0 5px, transparent 5px 8.5px) left bottom / 100% 2px no-repeat; }
.t-addr { letter-spacing: -.15px; }
.t-tel { letter-spacing: -1.8px; }
.t-mail { letter-spacing: .64px; }
.t-ig { letter-spacing: 1.3px; }
.t-fb { letter-spacing: .9px; }
.qa-title { margin-top: 97px; letter-spacing: -2px; }
.faq { margin-top: 26px; }
.faq-item { height: 60px; display: flex; align-items: center; font-size: 33.8px; font-weight: 400; color: #44474f; padding-left: 11px; white-space: nowrap; }
.chev { width: 28px; height: 16px; margin-right: 11px; flex: none; }
.chev path { fill: none; stroke: #44474f; stroke-width: 5; }
```
